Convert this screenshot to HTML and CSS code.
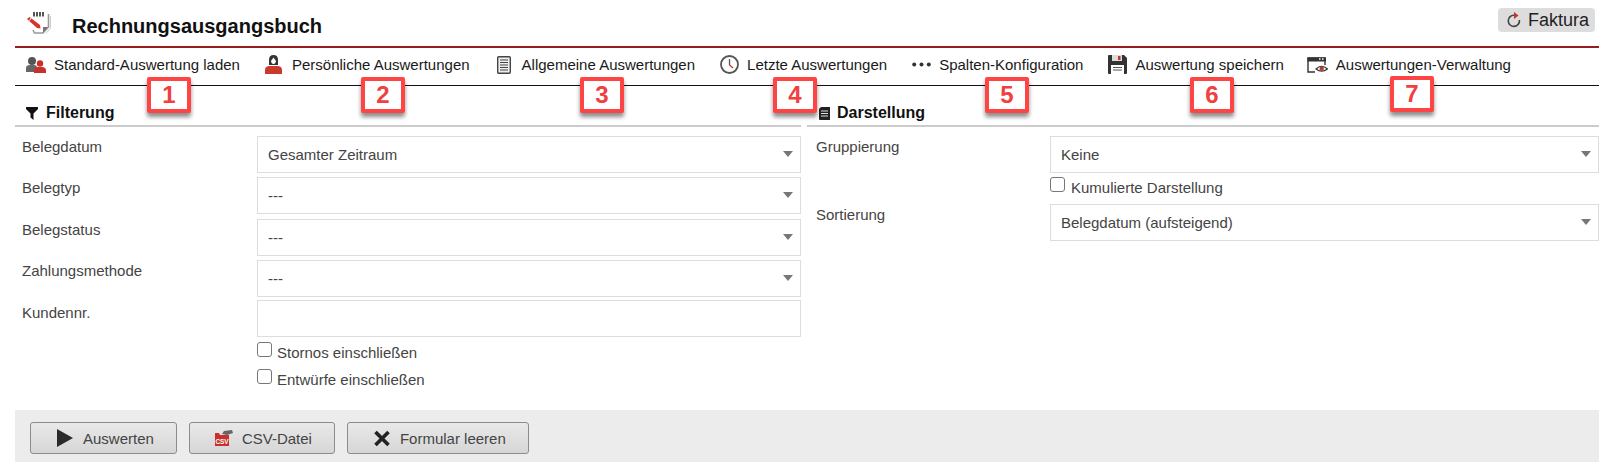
FILE: index.html
```html
<!DOCTYPE html>
<html lang="de">
<head>
<meta charset="utf-8">
<title>Rechnungsausgangsbuch</title>
<link rel="stylesheet" href="styles.css">
</head>
<body>
<div class="page">
  <header class="topbar">
    <svg class="page-icon" width="26" height="22" viewBox="0 0 26 22">
      <path d="M9 0V4.500M12 0V4.500M15 0V4.500M18 0V4.500" stroke="#444" stroke-width="1.800" fill="none"/>
      <path d="M23.500 2V15L18 21H9.500L8 18" fill="none" stroke="#999" stroke-width="1.600"/>
      <path d="M25.500 4V16L21 21.500" fill="none" stroke="#ccc" stroke-width="1"/>
      <path d="M18 21V15H23Z" fill="#777"/>
      <path d="M2 7L4.500 5L15 13L15.500 16.500L12 16Z" fill="#d8332b"/>
      <path d="M6.500 5.500L4.500 8.500" stroke="#fff" stroke-width="1"/>
    </svg>
    <h1 class="title">Rechnungsausgangsbuch</h1>
    <a class="module-link">
      <svg width="16" height="16" viewBox="0 0 16 16">
        <path d="M8 3.200A5.600 5.600 0 1 0 13.400 8" fill="none" stroke="#444" stroke-width="1.600"/>
        <path d="M8 0L12.500 3.500L8 7Z" fill="#c0392b"/>
      </svg>
      <span>Faktura</span>
    </a>
  </header>

  <nav class="toolbar">
    <a class="tool">
      <span class="tool-icon">
        <svg width="20" height="16" viewBox="0 0 20 16">
          <circle cx="6" cy="4" r="4" fill="#555"/>
          <path d="M0 15V11Q0 8 4 8H8Q11 8 11 11V15Z" fill="#666"/>
          <circle cx="14" cy="6.500" r="3.200" fill="#c9302c"/>
          <path d="M8 16V13.500Q8 10 12 10H16Q20 10 20 13.500V16Z" fill="#c9302c"/>
        </svg>
      </span>
      <span>Standard-Auswertung laden</span>
    </a>
    <a class="tool">
      <span class="tool-icon">
        <svg width="17" height="19" viewBox="0 0 17 19">
          <path d="M8.500 0Q13 0 13 5V10H4V5Q4 0 8.500 0Z" fill="#333"/>
          <path d="M8.500 2.500L11 6Q10.500 9 8.500 9Q6.500 9 6 6Z" fill="#fff"/>
          <path d="M0 19V15Q0 11 5 11H12Q17 11 17 15V19Z" fill="#c9392c"/>
        </svg>
      </span>
      <span>Persönliche Auswertungen</span>
    </a>
    <a class="tool">
      <span class="tool-icon">
        <svg width="14" height="18" viewBox="0 0 14 18">
          <rect x="0.700" y="0.700" width="12.600" height="16.600" rx="1" fill="#eee" stroke="#444" stroke-width="1.400"/>
          <path d="M3 4H11M3 6.500H11M3 9H11M3 11.500H11M3 14H11" stroke="#444" stroke-width="1.200"/>
        </svg>
      </span>
      <span>Allgemeine Auswertungen</span>
    </a>
    <a class="tool">
      <span class="tool-icon">
        <svg width="19" height="19" viewBox="0 0 19 19">
          <circle cx="9.500" cy="9.500" r="8.500" fill="#fff" stroke="#555" stroke-width="1.800"/>
          <path d="M9.500 4V10" stroke="#555" stroke-width="1.300"/>
          <path d="M9.500 10L13 13" stroke="#c0392b" stroke-width="1.300"/>
        </svg>
      </span>
      <span>Letzte Auswertungen</span>
    </a>
    <a class="tool">
      <span class="tool-icon">
        <svg width="19" height="5" viewBox="0 0 19 5">
          <circle cx="2.200" cy="2.500" r="2" fill="#333"/>
          <circle cx="9.500" cy="2.500" r="2" fill="#333"/>
          <circle cx="16.800" cy="2.500" r="2" fill="#333"/>
        </svg>
      </span>
      <span>Spalten-Konfiguration</span>
    </a>
    <a class="tool">
      <span class="tool-icon">
        <svg width="19" height="19" viewBox="0 0 19 19">
          <path d="M1 0H16L19 3V18Q19 19 18 19H1Q0 19 0 18V1Q0 0 1 0Z" fill="#333"/>
          <rect x="4" y="0" width="10" height="6" fill="#ddd"/>
          <rect x="10" y="1" width="2.500" height="4" fill="#c0392b"/>
          <rect x="3" y="10" width="13" height="9" fill="#fff"/>
          <path d="M5 12.500H14M5 15H14" stroke="#555" stroke-width="1.200"/>
        </svg>
      </span>
      <span>Auswertung speichern</span>
    </a>
    <a class="tool">
      <span class="tool-icon">
        <svg width="21" height="16" viewBox="0 0 21 16">
          <path d="M8 15H1V1H18V8" fill="#fff" stroke="#333" stroke-width="1.400"/>
          <rect x="0.500" y="0.500" width="18.500" height="4" fill="#333"/>
          <path d="M12 2H13.500M15 2H16.500" stroke="#fff" stroke-width="1.600"/>
          <path d="M9 12Q14.500 6.500 20.500 12Q14.500 16.500 9 12Z" fill="#fff" stroke="#333" stroke-width="1.100"/>
          <circle cx="14.700" cy="11.800" r="2.200" fill="#c0392b"/>
        </svg>
      </span>
      <span>Auswertungen-Verwaltung</span>
    </a>
  </nav>

  <main class="columns">
    <section class="panel">
      <h2 class="panel-title">
        <svg class="panel-icon" width="12" height="13" viewBox="0 0 12 13"><path d="M0 0H12V2L7.500 6.500V13L4.500 10.500V6.500L0 2Z" fill="#111"/></svg>
        <span>Filterung</span>
      </h2>
      <div class="form">
        <label class="field-label">Belegdatum</label>
        <div class="select"><select><option>Gesamter Zeitraum</option></select></div>
        <label class="field-label">Belegtyp</label>
        <div class="select"><select><option>---</option></select></div>
        <label class="field-label">Belegstatus</label>
        <div class="select"><select><option>---</option></select></div>
        <label class="field-label">Zahlungsmethode</label>
        <div class="select"><select><option>---</option></select></div>
        <label class="field-label field-label-input">Kundennr.</label>
        <div class="field-stack field-stack-input">
          <input class="text-input" type="text">
          <label class="check check-first"><input type="checkbox"><span>Stornos einschließen</span></label>
          <label class="check check-next"><input type="checkbox"><span>Entwürfe einschließen</span></label>
        </div>
      </div>
    </section>
    <section class="panel">
      <h2 class="panel-title panel-title-right">
        <svg class="panel-icon" width="11" height="13" viewBox="0 0 11 13"><path d="M2 0H11V13H1Q0 13 0 12V2Z" fill="#222"/><path d="M2 4H9M2 6.500H9M2 9H9" stroke="#ddd" stroke-width="1"/></svg>
        <span>Darstellung</span>
      </h2>
      <div class="form form-right">
        <label class="field-label">Gruppierung</label>
        <div class="field-stack">
          <div class="select"><select><option>Keine</option></select></div>
          <label class="check check-cumulative"><input type="checkbox"><span>Kumulierte Darstellung</span></label>
        </div>
        <label class="field-label">Sortierung</label>
        <div class="select"><select><option>Belegdatum (aufsteigend)</option></select></div>
      </div>
    </section>
  </main>

  <footer class="actions">
    <button class="btn" type="button">
      <svg class="btn-icon" width="16" height="18" viewBox="0 0 16 18"><path d="M0 0L16 9L0 18Z" fill="#2b2b2b"/></svg>
      <span>Auswerten</span>
    </button>
    <button class="btn" type="button">
      <svg class="btn-icon" width="18" height="16" viewBox="0 0 18 16">
        <path d="M0 3H4L5 5H14V16H0Z" fill="#c9302c"/>
        <path d="M7 4L9 1L17 0L18 3L12 5Z" fill="#666"/>
        <text x="0.500" y="14" textLength="13" lengthAdjust="spacingAndGlyphs" class="csv-glyph">CSV</text>
      </svg>
      <span>CSV-Datei</span>
    </button>
    <button class="btn" type="button">
      <svg class="btn-icon" width="17" height="17" viewBox="0 0 17 17"><path d="M2 2L15 15M15 2L2 15" stroke="#222" stroke-width="3.600"/></svg>
      <span>Formular leeren</span>
    </button>
  </footer>

  <span class="callout c1">1</span>
  <span class="callout c2">2</span>
  <span class="callout c3">3</span>
  <span class="callout c4">4</span>
  <span class="callout c5">5</span>
  <span class="callout c6">6</span>
  <span class="callout c7">7</span>
</div>
</body>
</html>
```

FILE: styles.css
```css
* { box-sizing: border-box; }
html, body { margin: 0; padding: 0; background: #fff; }
body { font-family: "Liberation Sans", Arial, sans-serif; font-size: 15px; color: #333; }
.page { position: relative; width: 1599px; height: 462px; overflow: hidden; padding-left: 15px; display: flex; flex-direction: column; }

.topbar { height: 48px; border-bottom: 2px solid #9b1c1c; display: flex; align-items: center; padding-left: 10px; padding-right: 4px; flex: none; }
.page-icon { flex: none; }
.title { margin: 6px 0 0 21px; font-size: 20px; font-weight: bold; color: #111; flex: 1; }
.module-link { display: flex; align-items: center; gap: 6px; height: 24px; padding: 0 6px 0 8px; background: #ddd; border-radius: 4px; font-size: 18px; color: #222; margin-bottom: 6px; }

.toolbar { height: 38px; border-bottom: 1px solid #111; display: flex; align-items: center; gap: 24px; padding-left: 11px; padding-bottom: 4px; flex: none; color: #1a1a1a; }
.tool { display: flex; align-items: center; gap: 8px; }
.tool-icon { width: 20px; height: 20px; display: flex; align-items: center; justify-content: center; flex: none; }
.tool-icon svg { flex: none; }

.columns { display: grid; grid-template-columns: 786px 792px; column-gap: 6px; flex: 1; }
.panel-title { margin: 0; height: 41px; border-bottom: 2px solid #ccc; display: flex; align-items: center; padding: 15px 0 0 11px; font-size: 16px; font-weight: bold; color: #111; gap: 8px; }
.panel-title-right { padding-left: 12px; gap: 7px; }
.form { display: grid; grid-template-columns: 242px 1fr; row-gap: 4.3px; padding-top: 9px; align-items: start; }
.form-right { grid-template-columns: 243px 1fr; row-gap: 0; }
.field-label { padding: 1px 0 0 7px; line-height: 20px; color: #444; font-size: 15px; }
.field-label-input { padding-top: 2px; }
.form-right .field-label { padding-left: 9px; }

.select { position: relative; height: 37px; }
.select::after { content: ""; position: absolute; right: 8px; top: 15px; border-left: 5.5px solid transparent; border-right: 5.5px solid transparent; border-top: 6px solid #777; pointer-events: none; }
.select select { appearance: none; -webkit-appearance: none; display: block; width: 100%; height: 100%; border: 1px solid #ddd; border-radius: 0; background: #fff; padding: 0 10px; font: 15px "Liberation Sans", Arial, sans-serif; color: #444; }
.text-input { display: block; width: 100%; height: 37px; border: 1px solid #ddd; background: #fff; padding: 0 10px; font: 15px "Liberation Sans", Arial, sans-serif; outline: none; }

.field-stack { display: flex; flex-direction: column; }
.field-stack-input { margin-top: -1px; }
.check { display: flex; align-items: flex-start; gap: 5px; color: #444; line-height: 20px; }
.check input { appearance: none; -webkit-appearance: none; flex: none; margin: 0; width: 15px; height: 15px; background: #fff; border: 1.5px solid #767676; border-radius: 3px; }
.check span { position: relative; }
.check-first { margin-top: 5px; }
.check-next { margin-top: 7px; }
.check-first span, .check-next span { top: 1px; }
.check-cumulative { margin-top: 4px; height: 27px; gap: 6px; }
.check-cumulative span { top: 1px; }

.actions { height: 52px; background: #ececec; padding: 12px 0 0 15px; display: flex; align-items: flex-start; gap: 12px; flex: none; }
.btn { height: 32px; padding: 0 22px 0 24px; display: inline-flex; align-items: center; justify-content: center; gap: 8px; border: 1px solid #8c8c8c; border-radius: 3px; background: linear-gradient(#e9e9e9, #d6d6d6); font: 15px "Liberation Sans", Arial, sans-serif; color: #444; }
.btn-icon { flex: none; width: 20px; }
.csv-glyph { font: bold 7.5px "Liberation Sans", Arial, sans-serif; fill: #fff; }

.callout { position: absolute; top: 77px; width: 44px; height: 36px; display: flex; align-items: center; justify-content: center; background: #fff; border: 4px solid #ff4444; border-radius: 2px; box-shadow: 0 4px 4px rgba(0, 0, 0, .45); font-size: 24px; font-weight: bold; color: #f04040; }
.c1 { left: 147px; }
.c2 { left: 361px; }
.c3 { left: 580px; }
.c4 { left: 773px; }
.c5 { left: 985px; }
.c6 { left: 1190px; }
.c7 { left: 1390px; top: 76px; }
```
